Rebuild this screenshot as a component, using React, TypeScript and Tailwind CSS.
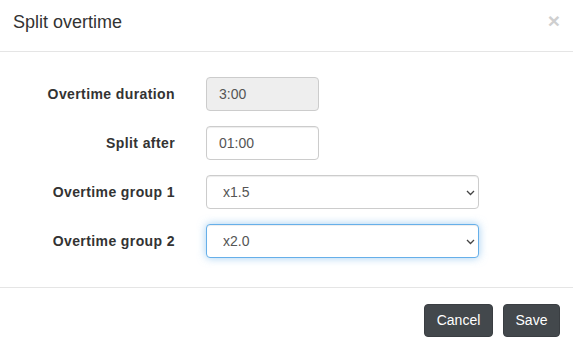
import type { ReactNode } from "react";

const font = { fontFamily: '"Liberation Sans", Arial, sans-serif' };

function Chevron() {
  return (
    <svg
      width="9"
      height="6"
      viewBox="0 0 9 6"
      className="pointer-events-none absolute right-[4px] top-[15px]"
      fill="none"
      stroke="#444"
      strokeWidth="1.3"
    >
      <path d="M1 1l3.5 3.5L8 1" />
    </svg>
  );
}

function Row({ label, children }: { label: string; children: ReactNode }) {
  return (
    <div className="flex h-[34px] items-center">
      <label className="w-[191px] pr-[16px] text-right text-[14px] font-bold tracking-[0.4px] text-[#333]">
        {label}
      </label>
      <div className="ml-[15px]">{children}</div>
    </div>
  );
}

export default function App() {
  return (
    <div className="h-[349px] w-[573px] bg-white" style={font}>
      <div className="flex h-[52px] items-start justify-between border-b border-[#e5e5e5] px-[13px] pt-[11px]">
        <h4 className="text-[18px] leading-[22px] text-[#333]">Split overtime</h4>
        <button className="mt-[-3px] text-[21px] font-bold leading-[25px] text-[#cfcfcf]">×</button>
      </div>

      <div className="flex flex-col gap-[15px] pt-[25px] pb-[29px]">
        <Row label="Overtime duration">
          <input
            readOnly
            value="3:00"
            className="h-[34px] w-[113px] rounded-[4px] border border-[#ccc] bg-[#eee] px-[12px] text-[14px] text-[#555] outline-none"
          />
        </Row>
        <Row label="Split after">
          <input
            defaultValue="01:00"
            className="h-[34px] w-[113px] rounded-[4px] border border-[#ccc] bg-white px-[12px] text-[14px] text-[#555] shadow-[inset_0_1px_1px_rgba(0,0,0,0.075)] outline-none"
          />
        </Row>
        <Row label="Overtime group 1">
          <div className="relative">
            <select
              defaultValue="x1.5"
              className="h-[34px] w-[273px] appearance-none rounded-[4px] border border-[#ccc] bg-white pl-[16px] text-[14px] text-[#555] shadow-[inset_0_1px_1px_rgba(0,0,0,0.075)] outline-none"
            >
              <option>x1.0</option>
              <option>x1.5</option>
              <option>x2.0</option>
            </select>
            <Chevron />
          </div>
        </Row>
        <Row label="Overtime group 2">
          <div className="relative">
            <select
              defaultValue="x2.0"
              className="h-[34px] w-[273px] appearance-none rounded-[4px] border border-[#66afe9] bg-white pl-[16px] text-[14px] text-[#555] shadow-[inset_0_1px_1px_rgba(0,0,0,0.075),0_0_8px_rgba(102,175,233,0.6)] outline-none"
            >
              <option>x1.0</option>
              <option>x1.5</option>
              <option>x2.0</option>
            </select>
            <Chevron />
          </div>
        </Row>
      </div>

      <div className="flex justify-end gap-[10px] border-t border-[#e5e5e5] px-[13px] pt-[16px]">
        <button className="h-[33px] w-[69px] rounded-[4px] border border-[#3a3e42] bg-[#43484c] text-[14px] text-white">
          Cancel
        </button>
        <button className="h-[33px] w-[57px] rounded-[4px] border border-[#3a3e42] bg-[#43484c] text-[14px] text-white">
          Save
        </button>
      </div>
    </div>
  );
}
